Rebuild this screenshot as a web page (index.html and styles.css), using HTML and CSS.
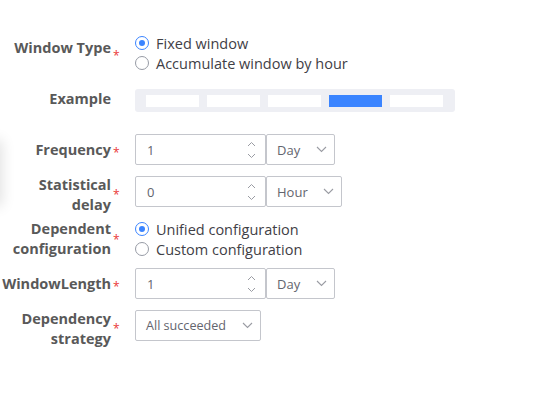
FILE: index.html
```html
<!DOCTYPE html>
<html>
<head>
<meta charset="utf-8">
<link rel="stylesheet" href="styles.css">
</head>
<body>
<div class="edge-shadow"></div>
<div class="form">
  <div class="row row-type">
    <div class="label"><span class="text">Window Type</span></div>
    <div class="req">*</div>
    <div class="radios">
      <label class="radio checked"><span class="dot"></span>Fixed window</label>
      <label class="radio"><span class="dot"></span>Accumulate window by hour</label>
    </div>
  </div>

  <div class="row row-example">
    <div class="label"><span class="text">Example</span></div>
    <div class="req"></div>
    <div class="example">
      <span class="seg"></span>
      <span class="seg"></span>
      <span class="seg"></span>
      <span class="seg active"></span>
      <span class="seg"></span>
    </div>
  </div>

  <div class="row row-freq">
    <div class="label"><span class="text">Frequency</span></div>
    <div class="req">*</div>
    <div class="combo">
      <div class="num"><span class="val">1</span>
        <span class="arrows">
          <svg width="9" height="6" viewBox="0 0 9 6"><path d="M1 5 L4.5 1.5 L8 5" fill="none" stroke="#9a9ca3" stroke-width="1"/></svg>
          <svg width="9" height="6" viewBox="0 0 9 6"><path d="M1 1 L4.5 4.5 L8 1" fill="none" stroke="#9a9ca3" stroke-width="1"/></svg>
        </span>
      </div>
      <div class="select sel-day"><span class="val">Day</span>
        <svg width="11" height="7" viewBox="0 0 11 7"><path d="M1 1 L5.5 5.5 L10 1" fill="none" stroke="#9a9ca3" stroke-width="1.1"/></svg>
      </div>
    </div>
  </div>

  <div class="row row-delay">
    <div class="label two"><span class="text">Statistical<br>delay</span></div>
    <div class="req">*</div>
    <div class="combo">
      <div class="num"><span class="val">0</span>
        <span class="arrows">
          <svg width="9" height="6" viewBox="0 0 9 6"><path d="M1 5 L4.5 1.5 L8 5" fill="none" stroke="#9a9ca3" stroke-width="1"/></svg>
          <svg width="9" height="6" viewBox="0 0 9 6"><path d="M1 1 L4.5 4.5 L8 1" fill="none" stroke="#9a9ca3" stroke-width="1"/></svg>
        </span>
      </div>
      <div class="select sel-hour"><span class="val">Hour</span>
        <svg width="11" height="7" viewBox="0 0 11 7"><path d="M1 1 L5.5 5.5 L10 1" fill="none" stroke="#9a9ca3" stroke-width="1.1"/></svg>
      </div>
    </div>
  </div>

  <div class="row row-dep">
    <div class="label two"><span class="text">Dependent<br>configuration</span></div>
    <div class="req">*</div>
    <div class="radios">
      <label class="radio checked"><span class="dot"></span>Unified configuration</label>
      <label class="radio"><span class="dot"></span>Custom configuration</label>
    </div>
  </div>

  <div class="row row-len">
    <div class="label"><span class="text">WindowLength</span></div>
    <div class="req">*</div>
    <div class="combo">
      <div class="num"><span class="val">1</span>
        <span class="arrows">
          <svg width="9" height="6" viewBox="0 0 9 6"><path d="M1 5 L4.5 1.5 L8 5" fill="none" stroke="#9a9ca3" stroke-width="1"/></svg>
          <svg width="9" height="6" viewBox="0 0 9 6"><path d="M1 1 L4.5 4.5 L8 1" fill="none" stroke="#9a9ca3" stroke-width="1"/></svg>
        </span>
      </div>
      <div class="select sel-day"><span class="val">Day</span>
        <svg width="11" height="7" viewBox="0 0 11 7"><path d="M1 1 L5.5 5.5 L10 1" fill="none" stroke="#9a9ca3" stroke-width="1.1"/></svg>
      </div>
    </div>
  </div>

  <div class="row row-strategy">
    <div class="label two"><span class="text">Dependency<br>strategy</span></div>
    <div class="req">*</div>
    <div class="select sel-strategy"><span class="val">All succeeded</span>
      <svg width="11" height="7" viewBox="0 0 11 7"><path d="M1 1 L5.5 5.5 L10 1" fill="none" stroke="#9a9ca3" stroke-width="1.1"/></svg>
    </div>
  </div>
</div>
</body>
</html>
```

FILE: styles.css
```css
html, body {
  margin: 0;
  padding: 0;
  background: #ffffff;
  width: 558px;
  height: 400px;
  overflow: hidden;
  position: relative;
  font-family: "Open Sans", "Noto Sans", "Liberation Sans", sans-serif;
  font-size: 14.5px;
  color: #444;
}

.edge-shadow {
  position: absolute;
  left: -22px;
  top: 142px;
  width: 22px;
  height: 62px;
  box-shadow: 0 0 14px 2px rgba(0, 0, 0, 0.12);
}

.form {
  display: flex;
  flex-direction: column;
  padding-top: 33px;
}

.row {
  display: flex;
  align-items: center;
  height: 31px;
}

.label {
  width: 111px;
  text-align: right;
  font-weight: 700;
  color: #595959;
  line-height: 20px;
  flex: none;
  white-space: nowrap;
}

.req {
  width: 24px;
  flex: none;
  color: #ea3636;
  font-size: 12px;
  padding-left: 2px;
  box-sizing: border-box;
  line-height: 12px;
  padding-top: 6px;
}

.row-type {
  align-items: flex-start;
  height: 40px;
}
.row-type .label {
  margin-top: 5px;
}
.row-type .req {
  margin-top: 11px;
}

.radios {
  display: flex;
  flex-direction: column;
}

.radio {
  display: flex;
  align-items: center;
  height: 20px;
  gap: 7px;
  color: #3f4046;
}

.dot {
  width: 14px;
  height: 14px;
  box-sizing: border-box;
  border: 1px solid #979ba5;
  border-radius: 50%;
  position: relative;
  flex: none;
}

.radio.checked .dot {
  border-color: #3a84ff;
}
.radio.checked .dot::after {
  content: "";
  position: absolute;
  left: 3px;
  top: 3px;
  width: 6px;
  height: 6px;
  border-radius: 50%;
  background: #3a84ff;
}

.row-example {
  margin-top: 16px;
  height: 23px;
}
.row-example .label {
  margin-top: -4px;
}

.example {
  width: 320px;
  height: 23px;
  box-sizing: border-box;
  background: #eeeff4;
  border-radius: 3px;
  display: flex;
  align-items: center;
  gap: 8px;
  padding: 0 11px;
}

.seg {
  width: 53px;
  height: 12px;
  background: #ffffff;
}
.seg.active {
  background: #3a84ff;
}

.row-freq {
  margin-top: 22px;
}
.row-delay {
  margin-top: 11px;
}
.row-dep {
  margin-top: 12px;
  height: 40px;
}
.row-dep .req {
  margin-top: -4px;
}
.row-len {
  margin-top: 9px;
}
.row-strategy {
  margin-top: 11px;
}

.row-delay .label,
.row-strategy .label {
  margin-top: 7px;
}

.combo {
  display: flex;
}

.num,
.select {
  height: 31px;
  box-sizing: border-box;
  border: 1px solid #c4c6cc;
  border-radius: 2px;
  display: flex;
  align-items: center;
  color: #63656e;
  font-size: 13px;
}

.num {
  width: 131px;
  padding-left: 11px;
  justify-content: space-between;
  padding-right: 9px;
}

.arrows {
  display: flex;
  flex-direction: column;
  gap: 6px;
}
.arrows svg {
  display: block;
}

.select {
  justify-content: space-between;
  padding-left: 10px;
  padding-right: 7px;
}

.sel-day {
  width: 69px;
}
.sel-hour {
  width: 76px;
}
.sel-strategy {
  width: 126px;
  font-size: 12.6px;
}
```
